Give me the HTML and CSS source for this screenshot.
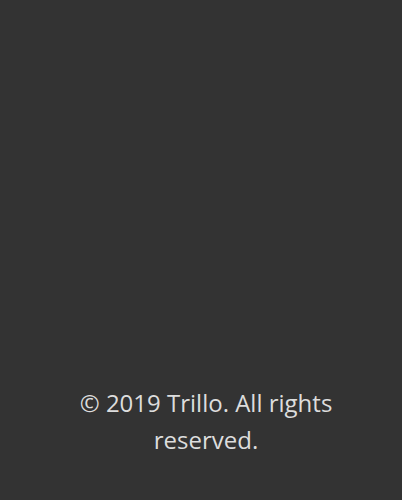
FILE: index.html
```html
<!DOCTYPE html>
<html>
<head>
<meta charset="utf-8">
<link rel="stylesheet" href="styles.css">
</head>
<body>
<aside class="sidebar">
  <div class="legal">&copy; 2019 Trillo. All rights reserved.</div>
</aside>
</body>
</html>
```
FILE: styles.css
```css
html, body {
  margin: 0;
  padding: 0;
  height: 100%;
}
body {
  background: #333333;
  font-family: "Open Sans", sans-serif;
}
.sidebar {
  height: 100%;
  display: flex;
  flex-direction: column;
  justify-content: flex-end;
}
.legal {
  font-size: 24px;
  line-height: 37px;
  color: #dddddd;
  text-align: center;
  padding: 0 56px 42px 66px;
}
```
